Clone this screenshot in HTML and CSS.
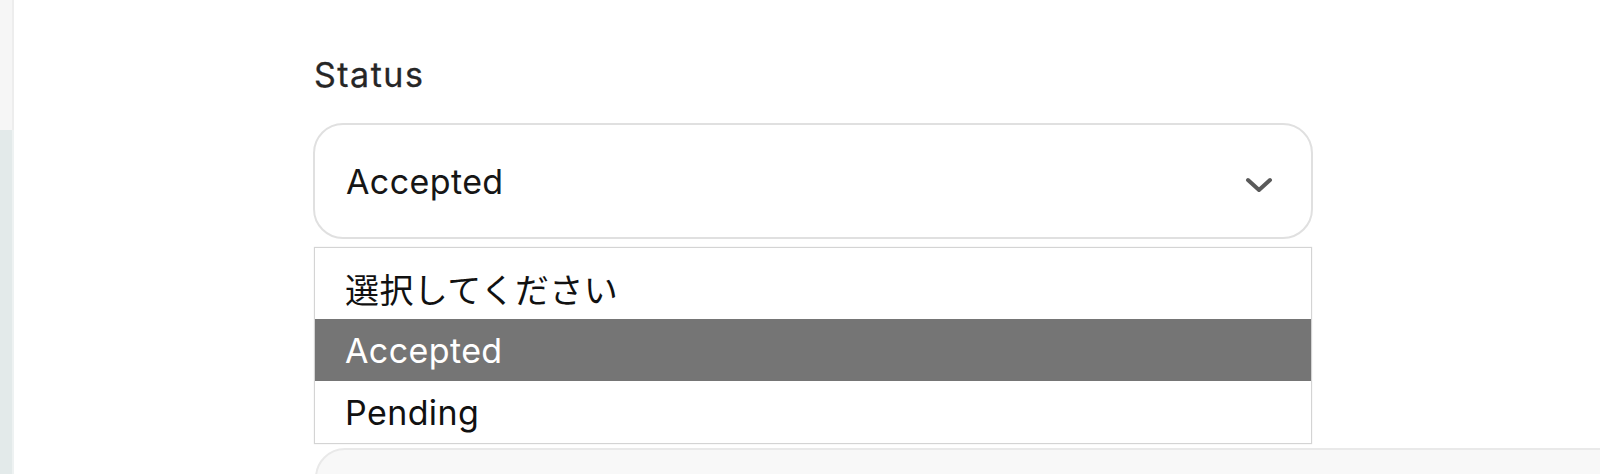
FILE: index.html
```html
<!DOCTYPE html>
<html lang="ja">
<head>
<meta charset="utf-8">
<title>Status</title>
<link rel="stylesheet" href="styles.css">
</head>
<body>
<div class="app">
  <aside class="sidebar">
    <div class="sidebar-top"></div>
    <div class="sidebar-bottom"></div>
  </aside>
  <main class="main">
    <div class="field">
      <label class="label">Status</label>
      <div class="select">
        <span class="select-value">Accepted</span>
        <svg class="chevron" width="28" height="17" viewBox="0 0 28 17" aria-hidden="true">
          <path d="M3 3 L14 13 L25 3" fill="none" stroke="#5a5a5a" stroke-width="4" stroke-linecap="round" stroke-linejoin="round"/>
        </svg>
      </div>
      <ul class="options">
        <li class="option">選択してください</li>
        <li class="option option-active">Accepted</li>
        <li class="option">Pending</li>
      </ul>
    </div>
    <div class="next-field"></div>
  </main>
</div>
</body>
</html>
```

FILE: styles.css
```css
* { box-sizing: border-box; }

html, body {
  margin: 0;
  padding: 0;
  background: #ffffff;
  font-family: Inter, "Noto Sans CJK JP", sans-serif;
}

.app {
  display: flex;
  width: 1600px;
  height: 474px;
  overflow: hidden;
}

.sidebar {
  width: 14px;
  flex: none;
  display: flex;
  flex-direction: column;
}

.sidebar-top {
  height: 130px;
  background: #f6f6f6;
  border-right: 2px solid #ededed;
}

.sidebar-bottom {
  flex: 1;
  background: #e3eaea;
  border-right: 2px solid #eef2f2;
}

.main {
  flex: 1;
  padding: 55px 0 0 299px;
  overflow: hidden;
}

.field {
  width: 1000px;
}

.label {
  display: block;
  font-size: 34px;
  font-weight: 400;
  line-height: 40px;
  color: #262626;
  letter-spacing: 1.5px;
  padding-left: 1px;
  -webkit-text-stroke: 0.3px #262626;
}

.select {
  margin-top: 28px;
  height: 116px;
  border: 2px solid #e0e0e0;
  border-radius: 30px;
  padding: 0 38px 0 31px;
  display: flex;
  align-items: center;
  justify-content: space-between;
  background: #ffffff;
}

.select-value {
  font-size: 34px;
  color: #161616;
  letter-spacing: 0.4px;
}

.chevron {
  margin-top: 8px;
}

.options {
  list-style: none;
  margin: 8px 1px 0;
  padding: 9px 0 0;
  border: 1px solid #d4d4d4;
  background: #ffffff;
  box-shadow: 0 0 1px rgba(0, 0, 0, 0.15);
}

.option {
  height: 62px;
  padding-left: 30px;
  display: flex;
  align-items: center;
  font-size: 34px;
  color: #111111;
  letter-spacing: 0.4px;
}

.option-active {
  background: #757575;
  color: #ffffff;
}

.next-field {
  margin: 4px 0 0 2px;
  width: 1400px;
  height: 100px;
  background: #f8f8f8;
  border: 2px solid #e9e9e9;
  border-radius: 30px;
}
```
